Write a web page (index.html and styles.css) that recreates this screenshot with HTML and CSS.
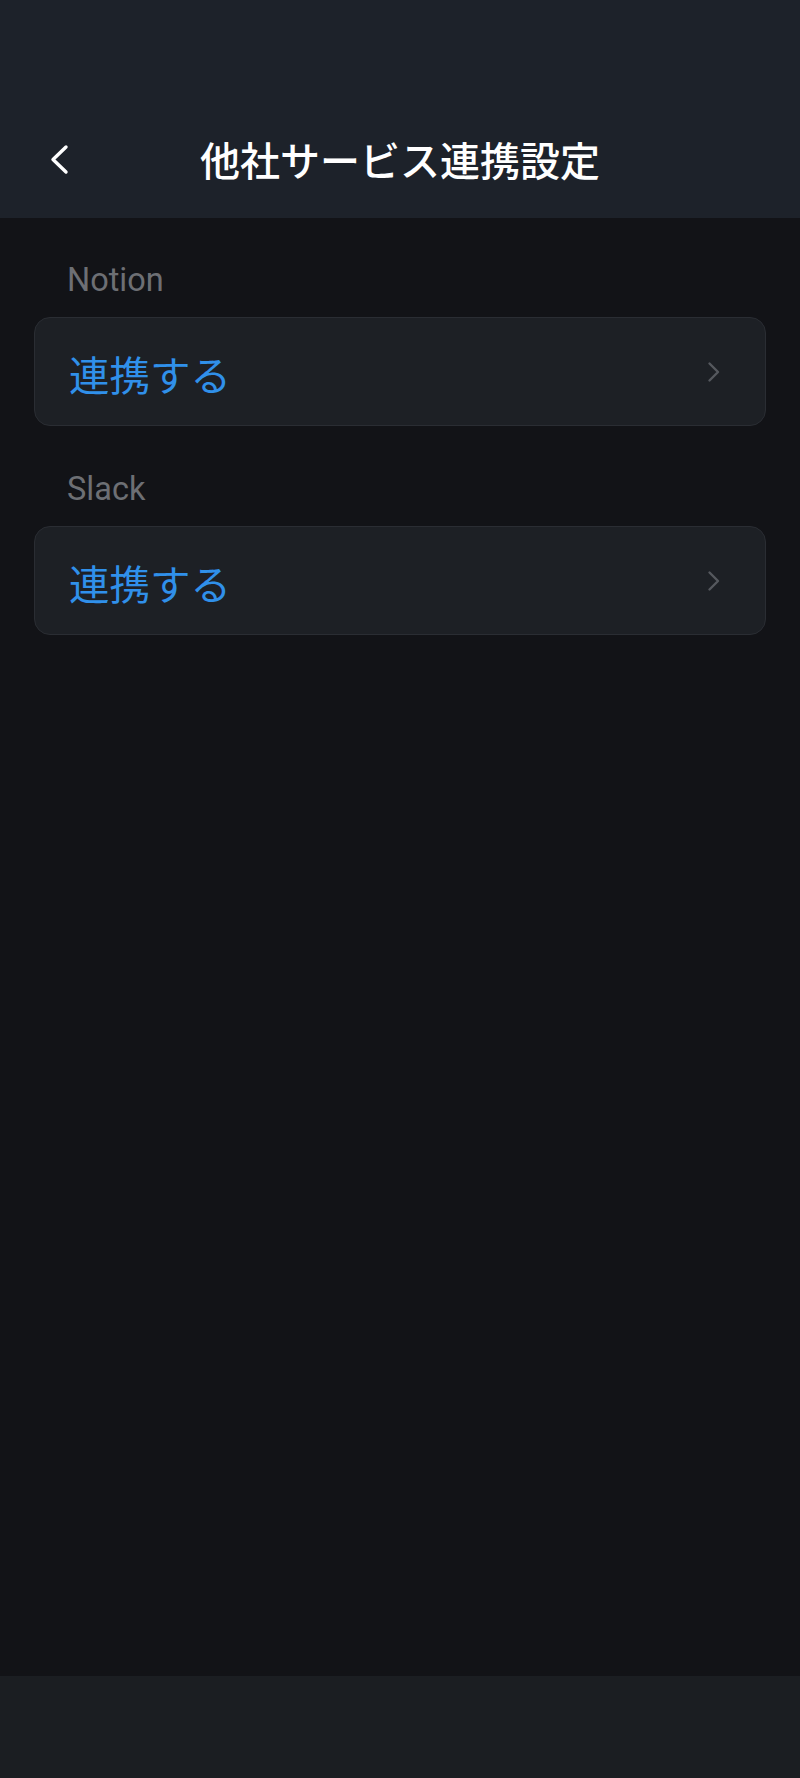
FILE: index.html
```html
<!DOCTYPE html>
<html lang="ja">
<head>
<meta charset="utf-8">
<title>他社サービス連携設定</title>
<link rel="stylesheet" href="styles.css">
</head>
<body>
<div class="app">
  <header class="header">
    <div class="toolbar">
      <button class="back" aria-label="戻る">
        <svg width="20" height="33" viewBox="0 0 20 33"><path d="M17 4 L4 16.5 L17 29" fill="none" stroke="#ffffff" stroke-width="3.4" stroke-linecap="round" stroke-linejoin="round"/></svg>
      </button>
      <h1 class="title">他社サービス連携設定</h1>
      <span></span>
    </div>
  </header>
  <main class="content">
    <section class="section">
      <div class="label">Notion</div>
      <div class="card">
        <span class="card-text">連携する</span>
        <svg class="chev" width="14" height="22" viewBox="0 0 14 22"><path d="M3.5 2.5 L12 11 L3.5 19.5" fill="none" stroke="#55585e" stroke-width="2.4" stroke-linecap="round" stroke-linejoin="round"/></svg>
      </div>
    </section>
    <section class="section">
      <div class="label">Slack</div>
      <div class="card">
        <span class="card-text">連携する</span>
        <svg class="chev" width="14" height="22" viewBox="0 0 14 22"><path d="M3.5 2.5 L12 11 L3.5 19.5" fill="none" stroke="#55585e" stroke-width="2.4" stroke-linecap="round" stroke-linejoin="round"/></svg>
      </div>
    </section>
  </main>
  <footer class="navbar"></footer>
</div>
</body>
</html>
```

FILE: styles.css
```css
* { box-sizing: border-box; }
html, body { margin: 0; padding: 0; }
body {
  background: #121317;
  font-family: Roboto, "Noto Sans CJK JP", "Noto Sans", sans-serif;
}
.app {
  min-height: 1778px;
  display: flex;
  flex-direction: column;
}
.header {
  height: 218px;
  background: #1d222a;
  padding-top: 120px;
}
.toolbar {
  height: 78px;
  display: grid;
  grid-template-columns: 1fr auto 1fr;
  align-items: center;
}
.back {
  justify-self: start;
  margin: 0 0 0 49px;
  padding: 0;
  border: 0;
  background: none;
  display: flex;
  width: 20px;
  height: 33px;
}
.title {
  margin: 0;
  font-family: "Noto Sans CJK JP", sans-serif;
  font-size: 40px;
  font-weight: 500;
  line-height: 78px;
  color: #ffffff;
  letter-spacing: 0;
}
.content {
  flex: 1;
  padding: 42px 34px 0;
  display: flex;
  flex-direction: column;
  gap: 43px;
}
.section {
  display: flex;
  flex-direction: column;
  gap: 17px;
}
.label {
  padding-left: 33px;
  font-family: Roboto, sans-serif;
  font-size: 32.5px;
  line-height: 40px;
  color: #6d6f74;
}
.card {
  height: 109px;
  background: #1d2025;
  border: 1px solid #2a2d33;
  border-radius: 16px;
  padding: 0 45px 0 34px;
  display: flex;
  align-items: center;
  justify-content: space-between;
}
.card-text {
  font-family: "Noto Sans CJK JP", sans-serif;
  font-size: 40.5px;
  line-height: 50px;
  padding-top: 4px;
  color: #3090ea;
}
.chev { display: block; }
.navbar {
  height: 102px;
  background: #1b1e22;
}
```
